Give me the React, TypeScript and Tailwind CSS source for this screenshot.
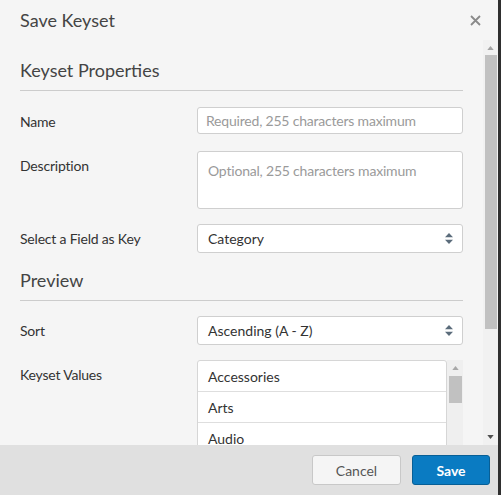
const font = { fontFamily: "Lato, 'Noto Sans', sans-serif" };

function SelectArrows() {
  return (
    <svg viewBox="0 0 8 11" className="w-[8px] h-[11px] shrink-0 text-[#5b6c7b]">
      <path d="M4 0L8 4.3H0Z" fill="currentColor" />
      <path d="M4 11L8 6.7H0Z" fill="currentColor" />
    </svg>
  );
}

function FakeSelect({ value }: { value: string }) {
  return (
    <div className="h-[29px] bg-white border border-[#cfcfcf] rounded-[3px] flex items-center justify-between pl-[10px] pr-[9px] text-[14px] text-[#333]">
      <span>{value}</span>
      <SelectArrows />
    </div>
  );
}

function Label({ children }: { children: string }) {
  return <div className="h-[28px] flex items-center text-[14px] tracking-[-0.2px] text-[#333]">{children}</div>;
}

function Heading({ children }: { children: string }) {
  return (
    <div className="border-b border-[#cccccc] pb-[8px]">
      <h3 className="text-[18px] leading-[24px] text-[#444]">{children}</h3>
    </div>
  );
}

const values = ["Accessories", "Arts", "Audio", "Books", "Cameras"];

export default function App() {
  return (
    <div className="w-[501px] h-[495px] bg-[#2f2f2f] flex overflow-hidden" style={font}>
      <div className="w-[498px] h-full bg-[#f5f5f5] flex flex-col">
        <div className="h-[40px] shrink-0 flex items-center justify-between pl-5 pr-[17px]">
          <h2 className="text-[18px] text-[#444]">Save Keyset</h2>
          <svg viewBox="0 0 11 11" className="w-[11px] h-[11px] text-[#8a8a8a]">
            <path d="M1 1L10 10M10 1L1 10" stroke="currentColor" strokeWidth="1.8" />
          </svg>
        </div>

        <div className="flex-1 flex min-h-0">
          <div className="flex-1 overflow-hidden pl-5 pr-5 pt-[18px]">
            <Heading>Keyset Properties</Heading>

            <div className="grid grid-cols-[177px_1fr] items-start mt-[16px]">
              <Label>Name</Label>
              <div className="h-[27px] bg-white border border-[#cfcfcf] rounded-[3px] flex items-center px-[8px] text-[14px] tracking-[-0.2px] text-[#9a9a9a]">
                Required, 255 characters maximum
              </div>
            </div>

            <div className="grid grid-cols-[177px_1fr] items-start mt-[16px]">
              <Label>Description</Label>
              <div className="h-[58px] bg-white border border-[#cfcfcf] rounded-[3px] px-[10px] pt-[8px] text-[14px] tracking-[-0.2px] text-[#9a9a9a]">
                Optional, 255 characters maximum
              </div>
            </div>

            <div className="grid grid-cols-[177px_1fr] items-start mt-[15px]">
              <Label>Select a Field as Key</Label>
              <FakeSelect value="Category" />
            </div>

            <div className="mt-[15px]">
              <Heading>Preview</Heading>
            </div>

            <div className="grid grid-cols-[177px_1fr] items-start mt-[15px]">
              <Label>Sort</Label>
              <FakeSelect value="Ascending (A - Z)" />
            </div>

            <div className="grid grid-cols-[177px_1fr] items-start mt-[15px]">
              <Label>Keyset Values</Label>
              <div className="flex">
                <div className="flex-1 bg-white border border-[#d6d6d6] rounded-[3px]">
                  {values.map((v) => (
                    <div key={v} className="h-[31px] border-b border-[#dedede] flex items-center px-[10px] text-[14px] text-[#333]">
                      {v}
                    </div>
                  ))}
                </div>
                <div className="w-[16px] shrink-0 bg-[#efefef] flex flex-col items-center pt-[6px]">
                  <svg viewBox="0 0 8 5" className="w-[7px] h-[4px] text-[#a8a8a8]">
                    <path d="M4 0L8 5H0Z" fill="currentColor" />
                  </svg>
                  <div className="mt-[6px] w-[13px] h-[27px] bg-[#c1c1c1]" />
                </div>
              </div>
            </div>
          </div>

          <div className="w-[15px] shrink-0 bg-[#f1f1f1] flex flex-col items-center pt-[6px] pb-[6px]">
            <svg viewBox="0 0 8 5" className="w-[7px] h-[4px] text-[#a3a3a3]">
              <path d="M4 0L8 5H0Z" fill="currentColor" />
            </svg>
            <div className="mt-[5px] w-[12px] h-[274px] bg-[#c1c1c1]" />
            <div className="flex-1" />
            <svg viewBox="0 0 8 5" className="w-[7px] h-[4px] text-[#505050]">
              <path d="M4 5L8 0H0Z" fill="currentColor" />
            </svg>
          </div>
        </div>

        <div className="h-[50px] shrink-0 bg-[#e0e0e0] flex items-center justify-end gap-[11px] pr-[8px]">
          <button className="w-[89px] h-[30px] rounded-[3px] border border-[#c8c8c8] bg-[#f5f5f5] text-[14px] text-[#555]">
            Cancel
          </button>
          <button className="w-[78px] h-[30px] rounded-[3px] border border-[#075f96] bg-[#0a7bc2] text-[14px] font-bold text-white">
            Save
          </button>
        </div>
      </div>
    </div>
  );
}
